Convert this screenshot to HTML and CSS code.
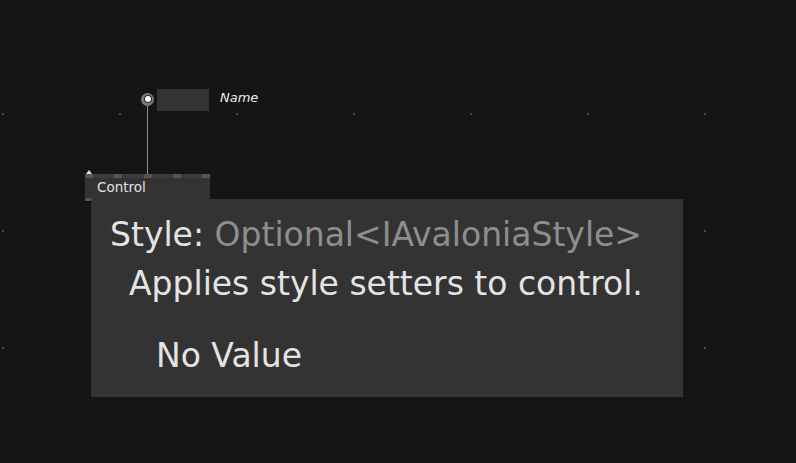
FILE: index.html
```html
<!DOCTYPE html>
<html>
<head>
<meta charset="utf-8">
<link rel="stylesheet" href="styles.css">
</head>
<body>
<div class="canvas">
  <div class="pin-node">
    <div class="pin"><div class="pin-dot"></div></div>
    <div class="pin-box"></div>
    <div class="pin-label">Name</div>
  </div>
  <div class="wire"></div>
  <div class="control-node">
    <div class="caret"></div>
    <div class="ticks">
      <span class="tick"></span><span class="tick"></span><span class="tick"></span><span class="tick"></span><span class="tick"></span>
    </div>
    <div class="control-title">Control</div>
    <div class="bottom-tick"></div>
  </div>
  <div class="tooltip">
    <div class="tip-title"><span class="tip-name">Style:</span> <span class="tip-type">Optional&lt;IAvaloniaStyle&gt;</span></div>
    <div class="tip-desc">Applies style setters to control.</div>
    <div class="tip-value">No Value</div>
  </div>
</div>
</body>
</html>
```
FILE: styles.css
```css
html, body {
  margin: 0;
  padding: 0;
  background: #151515;
}
.canvas {
  position: relative;
  width: 796px;
  height: 463px;
  overflow: hidden;
  font-family: "DejaVu Sans", sans-serif;
  background-color: #151515;
  background-image: radial-gradient(circle at 1px 1px, #4a4a4a 0.9px, transparent 1.2px);
  background-size: 117px 117px;
  background-position: 2px 113px;
}
.pin-node {
  position: absolute;
  left: 141px;
  top: 89px;
  display: flex;
  align-items: center;
  height: 22px;
}
.pin {
  width: 13px;
  height: 13px;
  border-radius: 50%;
  background: #7a7a7a;
  display: flex;
  align-items: center;
  justify-content: center;
  margin-top: -2px;
}
.pin-dot {
  width: 6px;
  height: 6px;
  border-radius: 50%;
  background: #ffffff;
  box-shadow: 0 0 0 1px #2a2a2a;
}
.pin-box {
  width: 52px;
  height: 22px;
  background: #333333;
  margin-left: 3px;
}
.pin-label {
  margin-left: 11px;
  margin-top: -5px;
  font-size: 13px;
  font-style: italic;
  color: #ececec;
}
.wire {
  position: absolute;
  left: 147px;
  top: 105px;
  width: 1px;
  height: 71px;
  background: #8a8a8a;
}
.control-node {
  position: absolute;
  left: 85px;
  top: 174px;
  width: 125px;
  height: 27px;
  background: #333333;
}
.caret {
  position: absolute;
  left: 1px;
  top: -4px;
  width: 0;
  height: 0;
  border-left: 3px solid transparent;
  border-right: 3px solid transparent;
  border-bottom: 4px solid #e0e0e0;
}
.ticks {
  height: 4px;
  background: #3c3c3c;
  display: flex;
  justify-content: space-between;
}
.tick {
  width: 8px;
  height: 4px;
  background: #555555;
}
.control-title {
  font-size: 13.5px;
  color: #e2e2e2;
  padding-left: 12px;
  line-height: 17px;
  margin-top: 1px;
}
.bottom-tick {
  position: absolute;
  left: 0;
  bottom: 0;
  width: 7px;
  height: 3px;
  background: #555555;
}
.tooltip {
  position: absolute;
  left: 91px;
  top: 199px;
  width: 592px;
  height: 198px;
  background: #333333;
  box-sizing: border-box;
  padding: 17px 0 0 19px;
  display: flex;
  flex-direction: column;
}
.tip-title,
.tip-desc,
.tip-value {
  font-size: 33px;
  line-height: 38px;
  color: #e4e4e4;
  white-space: nowrap;
}
.tip-type {
  color: #8e8e8e;
}
.tip-desc {
  margin-top: 11px;
  padding-left: 19px;
}
.tip-value {
  margin-top: 34px;
  padding-left: 46px;
}
```
